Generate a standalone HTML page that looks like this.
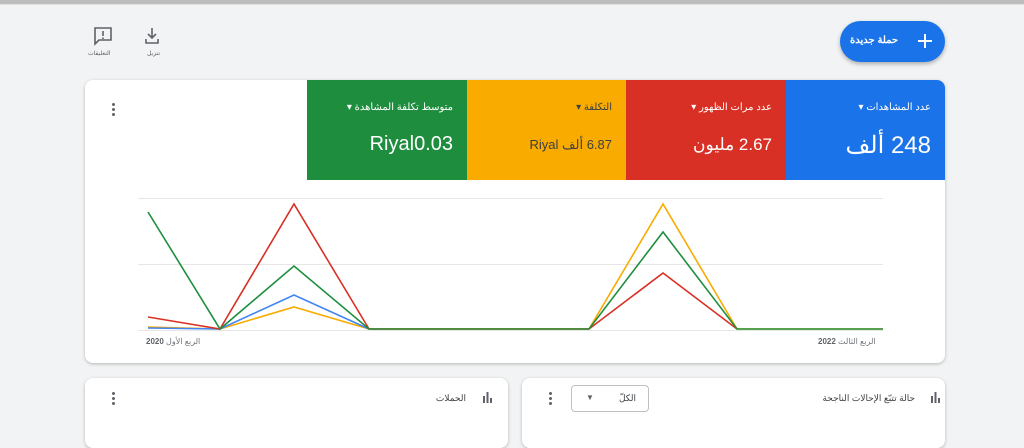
<!DOCTYPE html>
<html><head><meta charset="utf-8"><style>
*{box-sizing:border-box;margin:0;padding:0}
body{width:1024px;height:435px;overflow:hidden;background:#f1f3f4;font-family:"Liberation Sans","Noto Sans CJK SC",sans-serif;position:relative;color:#3c4043}
.abs{position:absolute}
.card{position:absolute;background:#fff;border-radius:8px;box-shadow:0 1px 3px rgba(0,0,0,.25)}
.tile{position:absolute;top:0;height:100px;color:#fff;direction:rtl;padding:22px 14px 0 10px}
.tile .t{font-size:10px}
.tile .v{font-size:22px;margin-top:20px}
.dots{position:absolute;width:3px}
.dots i{display:block;width:3px;height:3px;border-radius:50%;background:#5f6368;margin-bottom:2px}
</style></head><body>
<div class="abs" style="left:0;top:0;width:1024px;height:4px;background:#bdbdbd"></div>
<div class="abs" style="left:0;top:4px;width:1024px;height:1px;background:#e0e0e0"></div>
<svg class="abs" style="left:92px;top:26px" width="22" height="20" viewBox="0 0 22 20"><path d="M3 2h16v12H7l-4 4z" fill="none" stroke="#5f6368" stroke-width="1.6"/><path d="M11 5v5M11 11.5v1.5" stroke="#5f6368" stroke-width="1.6"/></svg>
<div class="abs" style="left:88px;top:50px;font-size:6px;color:#5f6368">التعليقات</div>
<svg class="abs" style="left:142px;top:26px" width="20" height="20" viewBox="0 0 20 20"><path d="M10 2v10M6 8l4 4 4-4M4 13v4h12v-4" fill="none" stroke="#5f6368" stroke-width="1.6"/></svg>
<div class="abs" style="left:147px;top:50px;font-size:6px;color:#5f6368">تنزيل</div>
<div class="abs" style="left:840px;top:21px;width:105px;height:41px;border-radius:21px;background:#1a73e8;box-shadow:0 2px 4px rgba(0,0,0,.3);color:#fff">
<span class="abs" style="left:10px;top:14px;font-size:10px;font-weight:bold">حملة جديدة</span>
<svg class="abs" style="left:78px;top:13px" width="14" height="14"><path d="M7 0v14M0 7h14" stroke="#fff" stroke-width="2"/></svg></div>
<div class="card" style="left:85px;top:80px;width:860px;height:283px;overflow:hidden">
<div class="dots" style="left:27px;top:23px"><i></i><i></i><i></i></div>
<div class="tile" style="left:222px;width:160px;background:#1e8e3e"><div class="t">متوسط تكلفة المشاهدة ▾</div><div class="v" style="font-size:20px">Riyal0.03</div></div>
<div class="tile" style="left:382px;width:159px;background:#f9ab00;color:#3c4043"><div class="t">التكلفة ▾</div><div class="v" style="font-size:13px;margin-top:24px">6.87 ألف Riyal</div></div>
<div class="tile" style="left:541px;width:160px;background:#d93025"><div class="t">عدد مرات الظهور ▾</div><div class="v" style="font-size:17px;margin-top:22px">2.67 مليون</div></div>
<div class="tile" style="left:701px;width:159px;background:#1a73e8"><div class="t">عدد المشاهدات ▾</div><div class="v" style="font-size:24px;margin-top:18px">248 ألف</div></div>
</div>
<svg class="abs" style="left:0;top:0" width="1024" height="435">
<g stroke="#e6e6e6" stroke-width="1"><line x1="138" y1="198.5" x2="883" y2="198.5"/><line x1="138" y1="264.5" x2="883" y2="264.5"/><line x1="138" y1="330.5" x2="883" y2="330.5"/></g>
<g fill="none" stroke-width="1.6">
<polyline stroke="#f9ab00" points="148,327 220,329 294,307 369,329 589,329 663,204 737,329 883,329"/>
<polyline stroke="#4285f4" points="148,328 220,329 294,295 369,329"/>
<polyline stroke="#d93025" points="148,317 220,329 294,204 369,329 589,329 663,273 737,329"/>
<polyline stroke="#1e8e3e" points="148,212 220,329 294,266 369,329 589,329 663,232 737,329 883,329"/>
</g></svg>
<div class="abs" style="left:146px;top:337px;font-size:8px;color:#70757a">الربع الأول <b style="color:#5f6368">2020</b></div>
<div class="abs" style="left:818px;top:337px;font-size:8px;color:#70757a">الربع الثالث <b style="color:#5f6368">2022</b></div>
<div class="card" style="left:85px;top:378px;width:423px;height:70px">
<div class="dots" style="left:27px;top:14px"><i></i><i></i><i></i></div>
<div class="abs" style="right:42px;top:15px;font-size:9px">الحملات</div>
<svg class="abs" style="right:15px;top:14px" width="11" height="11"><path d="M1 4h2v7H1zM4.5 0h2v11h-2zM8 6h2v5H8z" fill="#5f6368"/></svg>
</div>
<div class="card" style="left:522px;top:378px;width:423px;height:70px">
<div class="dots" style="left:27px;top:14px"><i></i><i></i><i></i></div>
<div class="abs" style="left:49px;top:7px;width:78px;height:27px;border:1px solid #bdc1c6;border-radius:4px"><span class="abs" style="left:14px;top:7px;font-size:8px;color:#5f6368">▼</span><span class="abs" style="right:12px;top:7px;font-size:9px">الكلّ</span></div>
<div class="abs" style="right:30px;top:15px;font-size:9px">حالة تتبّع الإحالات الناجحة</div>
<svg class="abs" style="right:4px;top:14px" width="11" height="11"><path d="M1 4h2v7H1zM4.5 0h2v11h-2zM8 6h2v5H8z" fill="#5f6368"/></svg>
</div>
</body></html>
